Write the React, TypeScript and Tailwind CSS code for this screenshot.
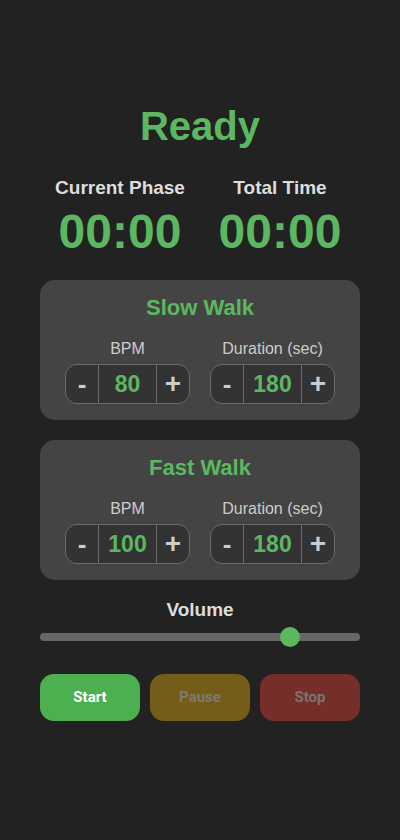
import { useState } from "react";

type Phase = { title: string; bpm: number; duration: number };

function Stepper({ value, onChange }: { value: number; onChange: (v: number) => void }) {
  return (
    <div className="flex h-10 w-[125px] overflow-hidden rounded-xl border border-[#6a6a6a] bg-[#333333]">
      <button
        className="flex w-8 items-center justify-center text-[26px] font-bold text-[#cccccc]"
        onClick={() => onChange(value - 1)}
      >
        -
      </button>
      <div className="flex flex-1 items-center justify-center border-x border-[#6a6a6a] text-[23px] font-bold text-[#5cb860]">
        {value}
      </div>
      <button
        className="flex w-8 items-center justify-center text-[28px] font-bold text-[#cccccc]"
        onClick={() => onChange(value + 1)}
      >
        +
      </button>
    </div>
  );
}

function PhaseCard({ phase, onChange }: { phase: Phase; onChange: (p: Phase) => void }) {
  return (
    <section className="rounded-[15px] bg-[#444444] px-5 pb-4 pt-[15px]">
      <h2 className="text-center text-[22px] font-bold leading-[26px] text-[#5cb860]">{phase.title}</h2>
      <div className="mt-[19px] flex justify-center gap-5">
        <div className="flex flex-col items-center">
          <span className="mb-[6px] text-base leading-[18px] text-[#cccccc]">BPM</span>
          <Stepper value={phase.bpm} onChange={(bpm) => onChange({ ...phase, bpm })} />
        </div>
        <div className="flex flex-col items-center">
          <span className="mb-[6px] text-base leading-[18px] text-[#cccccc]">Duration (sec)</span>
          <Stepper value={phase.duration} onChange={(duration) => onChange({ ...phase, duration })} />
        </div>
      </div>
    </section>
  );
}

export default function App() {
  const [slow, setSlow] = useState<Phase>({ title: "Slow Walk", bpm: 80, duration: 180 });
  const [fast, setFast] = useState<Phase>({ title: "Fast Walk", bpm: 100, duration: 180 });
  const [volume, setVolume] = useState(80);

  return (
    <div className="min-h-[840px] bg-[#222222] px-10 pt-[102px] font-['Liberation_Sans',Arial,sans-serif]">
      <h1 className="text-center text-[40px] font-bold leading-[48px] text-[#5cb860]">Ready</h1>

      <div className="mt-[27px] grid grid-cols-2">
        <div className="flex flex-col items-center">
          <span className="text-[19px] font-bold leading-[22px] text-[#dddddd]">Current Phase</span>
          <span className="mt-[5px] text-[48px] font-bold leading-[55px] text-[#5cb860]">00:00</span>
        </div>
        <div className="flex flex-col items-center">
          <span className="text-[19px] font-bold leading-[22px] text-[#dddddd]">Total Time</span>
          <span className="mt-[5px] text-[48px] font-bold leading-[55px] text-[#5cb860]">00:00</span>
        </div>
      </div>

      <div className="mt-[21px] flex flex-col gap-5">
        <PhaseCard phase={slow} onChange={setSlow} />
        <PhaseCard phase={fast} onChange={setFast} />
      </div>

      <div className="mt-[19px] text-center text-[19px] font-bold leading-[22px] text-[#dddddd]">Volume</div>
      <div className="relative mt-[6px] h-5">
        <div className="absolute inset-x-0 top-[6px] h-2 rounded-full bg-[#666666]" />
        <div
          className="absolute top-0 h-5 w-5 -translate-x-1/2 rounded-full bg-[#5cb860]"
          style={{ left: `calc(10px + (100% - 20px) * ${volume / 100})` }}
          onClick={() => setVolume(volume)}
        />
      </div>

      <div className="mt-[27px] grid grid-cols-3 gap-[10px] font-['Roboto',Arial,sans-serif]">
        <button className="h-[47px] rounded-[14px] bg-[#4caf50] text-[15px] font-bold text-white">Start</button>
        <button className="h-[47px] rounded-[14px] bg-[#765c19] text-[15px] font-bold text-[#7c7a72]">Pause</button>
        <button className="h-[47px] rounded-[14px] bg-[#762e2b] text-[15px] font-bold text-[#7b7372]">Stop</button>
      </div>
    </div>
  );
}
